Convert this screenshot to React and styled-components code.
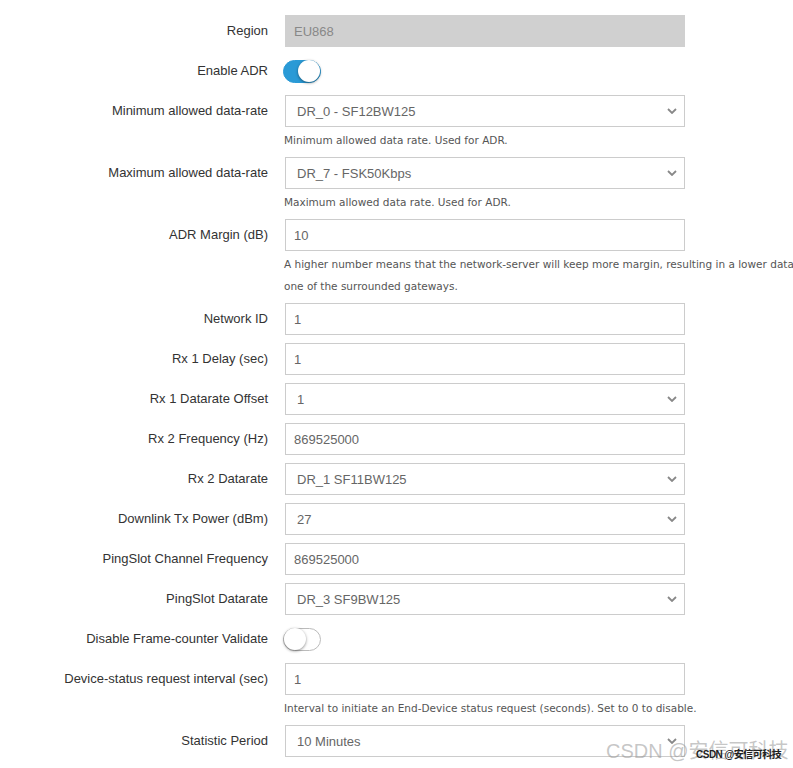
import React from "react";
import styled, { createGlobalStyle } from "styled-components";

const GlobalStyle = createGlobalStyle`
  html, body {
    margin: 0;
    padding: 0;
    background: #fff;
    overflow: hidden;
  }
  body {
    font-family: "Liberation Sans", Arial, sans-serif;
  }
`;

const fields = [
  { label: "Region", kind: "input", value: "EU868", disabled: true },
  { label: "Enable ADR", kind: "toggle", on: true },
  {
    label: "Minimum allowed data-rate",
    kind: "select",
    value: "DR_0 - SF12BW125",
    help: ["Minimum allowed data rate. Used for ADR."],
  },
  {
    label: "Maximum allowed data-rate",
    kind: "select",
    value: "DR_7 - FSK50Kbps",
    help: ["Maximum allowed data rate. Used for ADR."],
  },
  {
    label: "ADR Margin (dB)",
    kind: "input",
    value: "10",
    help: [
      "A higher number means that the network-server will keep more margin, resulting in a lower data-rate but decreasing the chance that the device gets disconnected because it is unable to reach",
      "one of the surrounded gateways.",
    ],
  },
  { label: "Network ID", kind: "input", value: "1" },
  { label: "Rx 1 Delay (sec)", kind: "input", value: "1" },
  { label: "Rx 1 Datarate Offset", kind: "select", value: "1" },
  { label: "Rx 2 Frequency (Hz)", kind: "input", value: "869525000" },
  { label: "Rx 2 Datarate", kind: "select", value: "DR_1 SF11BW125" },
  { label: "Downlink Tx Power (dBm)", kind: "select", value: "27" },
  { label: "PingSlot Channel Frequency", kind: "input", value: "869525000" },
  { label: "PingSlot Datarate", kind: "select", value: "DR_3 SF9BW125" },
  { label: "Disable Frame-counter Validate", kind: "toggle", on: false },
  {
    label: "Device-status request interval (sec)",
    kind: "input",
    value: "1",
    help: [
      "Interval to initiate an End-Device status request (seconds). Set to 0 to disable.",
    ],
  },
  { label: "Statistic Period", kind: "select", value: "10 Minutes" },
];

const Chevron = () => (
  <svg width="10" height="6" viewBox="0 0 10 6">
    <path d="M1 1 L5 5 L9 1" fill="none" stroke="#888" strokeWidth="1.8" />
  </svg>
);

const Field = ({ field }) => {
  if (field.kind === "toggle") {
    return (
      <Switch $on={field.on}>
        <Knob />
      </Switch>
    );
  }
  if (field.kind === "select") {
    return (
      <SelectBox>
        <SelectText>{field.value}</SelectText>
        <Chevron />
      </SelectBox>
    );
  }
  return (
    <TextInput readOnly defaultValue={field.value} $disabled={field.disabled} />
  );
};

const App = () => {
  return (
    <>
      <GlobalStyle />
      <Form>
        {fields.map((f) => (
          <Row key={f.label}>
            <Label>{f.label}</Label>
            <Field field={f} />
            {f.help && (
              <Help>
                {f.help.map((line) => (
                  <HelpLine key={line}>{line}</HelpLine>
                ))}
              </Help>
            )}
          </Row>
        ))}
      </Form>
      <Watermark>CSDN @安信可科技</Watermark>
      <WatermarkSmall>CSDN @安信可科技</WatermarkSmall>
    </>
  );
};

const Form = styled.div`
  padding-top: 15px;
  display: flex;
  flex-direction: column;
  gap: 8px;
`;

const Row = styled.div`
  display: grid;
  grid-template-columns: 268px 400px;
  column-gap: 17px;
  align-items: center;
`;

const Label = styled.div`
  text-align: right;
  font-size: 13px;
  line-height: 32px;
  color: #333;
  white-space: nowrap;
`;

const TextInput = styled.input`
  box-sizing: border-box;
  width: 400px;
  height: 32px;
  margin: 0;
  padding: 0 8px;
  border: 1px solid ${(p) => (p.$disabled ? "#d0d0d0" : "#ccc")};
  border-radius: 0;
  background: ${(p) => (p.$disabled ? "#d0d0d0" : "#fff")};
  color: ${(p) => (p.$disabled ? "#888" : "#666")};
  font-family: "Liberation Sans", Arial, sans-serif;
  font-size: 13px;
  outline: none;
`;

const SelectBox = styled.div`
  box-sizing: border-box;
  width: 400px;
  height: 32px;
  border: 1px solid #ccc;
  background: #fff;
  display: flex;
  align-items: center;
  justify-content: space-between;
  padding: 0 7px 0 11px;
`;

const SelectText = styled.span`
  font-size: 13px;
  color: #666;
`;

const Switch = styled.div`
  box-sizing: border-box;
  width: 38px;
  height: 23px;
  margin-left: -2px;
  border-radius: 12px;
  background: ${(p) => (p.$on ? "#2a9ad6" : "#fff")};
  border: 1px solid ${(p) => (p.$on ? "#2a9ad6" : "#bbb")};
  display: flex;
  align-items: center;
  justify-content: ${(p) => (p.$on ? "flex-end" : "flex-start")};
`;

const Knob = styled.div`
  width: 22px;
  height: 22px;
  border-radius: 50%;
  background: #fff;
  box-shadow: 0 1px 3px rgba(0, 0, 0, 0.45);
`;

const Help = styled.div`
  grid-column: 2;
  padding-top: 3px;
  margin-left: -1px;
  margin-bottom: -2px;
  font-family: "DejaVu Sans", Verdana, sans-serif;
  font-size: 10.5px;
  line-height: 21px;
  color: #555;
`;

const HelpLine = styled.div`
  white-space: nowrap;

  & + & {
    margin-top: 1px;
  }
`;

const Watermark = styled.div`
  position: absolute;
  left: 606px;
  top: 735px;
  font-family: "Liberation Sans", "Noto Sans CJK SC", sans-serif;
  font-size: 20px;
  color: rgba(150, 150, 150, 0.55);
  white-space: nowrap;
`;

const WatermarkSmall = styled.div`
  position: absolute;
  left: 696px;
  top: 746px;
  font-family: "Liberation Sans", "Noto Sans CJK SC", sans-serif;
  font-size: 10px;
  font-weight: bold;
  letter-spacing: -0.5px;
  color: #222;
  white-space: nowrap;
`;

export default App;
